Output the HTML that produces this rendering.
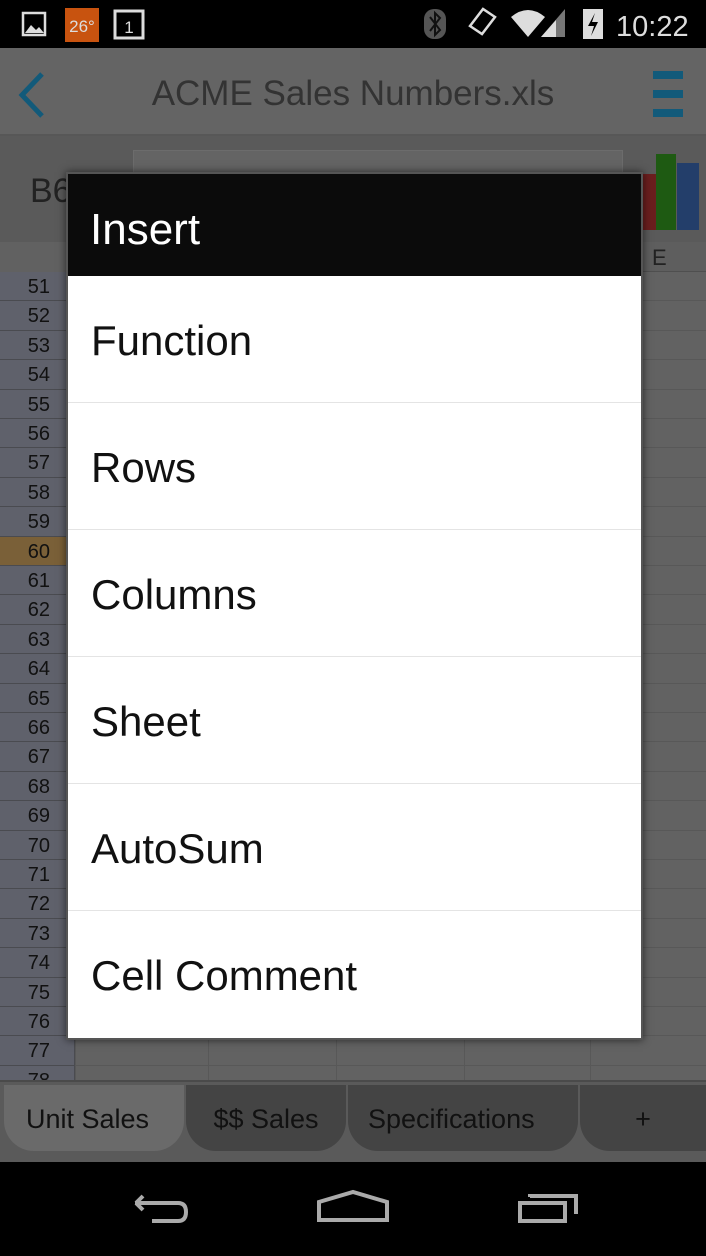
<!DOCTYPE html>
<html><head><style>
*{margin:0;padding:0;box-sizing:border-box}
body{width:706px;height:1256px;overflow:hidden;background:#5c5c5c;font-family:"Liberation Sans",sans-serif;position:relative}
.abs{position:absolute}
.rh{position:absolute;left:0;width:75px;height:29.4px;background:#5f616b;border-bottom:1px solid #4a4b50;border-right:1px solid #4a4b50;color:#111;font-size:20px;text-align:right;padding-right:24px;line-height:30px}
.item{position:absolute;left:68px;width:573px;height:127px;background:#fff;border-bottom:1px solid #e4e4e4;font-size:42px;color:#111;padding-left:23px;line-height:130px}
.tab{position:absolute;top:1085px;height:66px;border-radius:0 0 30px 30px;color:#111;font-size:27px;text-align:center;line-height:68px}
</style></head><body>
<div class="abs" style="left:0;top:0;width:706px;height:48px;background:#000"></div>
<svg class="abs" style="left:0;top:0" width="706" height="48">
<rect x="23" y="13" width="22" height="22" fill="none" stroke="#ddd" stroke-width="2.5"/>
<path d="M25 33 L31 25 L36 30 L39 27 L44 33Z" fill="#ddd"/>
<rect x="65" y="8" width="34" height="34" fill="#c8530f"/>
<text x="82" y="32" fill="#ddd" font-size="17" text-anchor="middle" font-family="Liberation Sans">26°</text>
<rect x="115" y="11" width="28" height="27" fill="none" stroke="#ddd" stroke-width="3"/>
<text x="129" y="33" fill="#ddd" font-size="17" text-anchor="middle" font-family="Liberation Sans">1</text>
<rect x="424" y="9" width="22" height="30" rx="10" fill="#555"/>
<path d="M430 17 L440 30 L435 35 L435 13 L440 18 L430 31" stroke="#111" stroke-width="2" fill="none"/>
<path d="M470 26 L483 9 L495 17 L482 34Z" fill="none" stroke="#ddd" stroke-width="2.5"/>
<path d="M511 17 Q528 3 545 17 L528 37Z" fill="#ddd"/>
<path d="M541 37 L565 9 L565 37Z" fill="#777"/><path d="M541 37 L556 20 L556 37Z" fill="#ddd"/>
<rect x="583" y="9" width="20" height="30" fill="#ddd"/><path d="M595 13 L588 26 L594 26 L591 36 L598 22 L592 22Z" fill="#000"/>
<text x="616" y="36" fill="#ddd" font-size="29" font-family="Liberation Sans">10:22</text>
</svg>
<div class="abs" style="left:0;top:48px;width:706px;height:88px;background:#646464;border-bottom:2px solid #575757"></div>
<svg class="abs" style="left:0;top:48px" width="706" height="88">
<path d="M42 26 L22 47 L42 68" stroke="#125a7a" stroke-width="5" fill="none"/>
<rect x="653" y="23" width="30" height="8" fill="#125a7a"/><rect x="653" y="42" width="30" height="8" fill="#125a7a"/><rect x="653" y="61" width="30" height="8" fill="#125a7a"/>
</svg>
<div class="abs" style="left:0;top:74px;width:706px;text-align:center;font-size:35px;color:#333">ACME Sales Numbers.xls</div>
<div class="abs" style="left:0;top:136px;width:706px;height:106px;background:#5a5a5a"></div>
<div class="abs" style="left:133px;top:150px;width:490px;height:60px;background:#646464;border:1px solid #6c6c6c"></div>
<div class="abs" style="left:30px;top:172px;font-size:34px;color:#222">B60</div>
<div class="abs" style="left:636px;top:174px;width:20px;height:56px;background:#6b1e1e"></div>
<div class="abs" style="left:656px;top:154px;width:20px;height:76px;background:#1e5a12"></div>
<div class="abs" style="left:677px;top:163px;width:22px;height:67px;background:#233e6a"></div>
<div class="abs" style="left:0;top:242px;width:706px;height:30px;background:#5e5e5e;border-bottom:1px solid #4f4f4f"></div>
<div class="abs" style="left:0;top:242px;width:75px;height:30px;background:#616161;border-right:1px solid #4f4f4f"></div>
<div class="abs" style="left:652px;top:245px;font-size:22px;color:#222">E</div>
<div class="abs" style="left:0;top:272px;width:706px;height:808px;background:#626262"></div>
<div id="rows"></div>
<div class="abs" style="left:75px;top:272px;width:1px;height:808px;background:#585858"></div>
<div class="abs" style="left:208px;top:272px;width:1px;height:808px;background:#585858"></div>
<div class="abs" style="left:336px;top:272px;width:1px;height:808px;background:#585858"></div>
<div class="abs" style="left:464px;top:272px;width:1px;height:808px;background:#585858"></div>
<div class="abs" style="left:590px;top:272px;width:1px;height:808px;background:#585858"></div>
<div class="abs" style="left:0;top:1080px;width:706px;height:82px;background:#5a5a5a;border-top:2px solid #4a4a4a"></div>
<div class="tab" style="left:4px;width:180px;background:#6a6a6a;text-align:left;padding-left:22px">Unit Sales</div>
<div class="tab" style="left:186px;width:160px;background:#444">$$ Sales</div>
<div class="tab" style="left:348px;width:230px;background:#444;text-align:left;padding-left:20px">Specifications</div>
<div class="tab" style="left:580px;width:126px;background:#444;border-radius:0 0 0 30px">+</div>
<div class="abs" style="left:0;top:1162px;width:706px;height:94px;background:#000"></div>
<svg class="abs" style="left:0;top:1162px" width="706" height="94">
<path d="M135 41 L178 41 Q186 41 186 50 Q186 59 178 59 L152 59" stroke="#aaa" stroke-width="4" fill="none"/>
<path d="M136 41 L143 34 M136 41 L143 48" stroke="#aaa" stroke-width="4"/>
<path d="M319 58 L319 40 L353 30 L387 40 L387 58Z" stroke="#aaa" stroke-width="4" fill="none"/>
<rect x="520" y="41" width="45" height="18" stroke="#aaa" stroke-width="4" fill="none"/>
<path d="M530 35 L530 34 L576 34 L576 52" stroke="#aaa" stroke-width="4" fill="none"/>
</svg>
<div class="abs" style="left:66px;top:172px;width:577px;height:868px;box-shadow:0 0 8px rgba(0,0,0,.6);border:2px solid #555"></div>
<div class="abs" style="left:68px;top:174px;width:573px;height:102px;background:#0b0b0b;color:#fff;font-size:44px;padding-left:22px;line-height:112px">Insert</div>
<div class="item" style="top:276px">Function</div>
<div class="item" style="top:403px">Rows</div>
<div class="item" style="top:530px">Columns</div>
<div class="item" style="top:657px">Sheet</div>
<div class="item" style="top:784px">AutoSum</div>
<div class="item" style="top:911px;border-bottom:none">Cell Comment</div>
<script>
var h='';for(var i=51;i<=78;i++){var t=272+(i-51)*29.4;var bg=i==60?'background:#7a6038;':'';h+='<div class="rh" style="top:'+t+'px;'+bg+'">'+i+'</div><div class="abs" style="left:75px;top:'+(t+28.4)+'px;width:631px;height:1px;background:#585858"></div>';}
document.getElementById('rows').innerHTML=h;
</script>
</body></html>
